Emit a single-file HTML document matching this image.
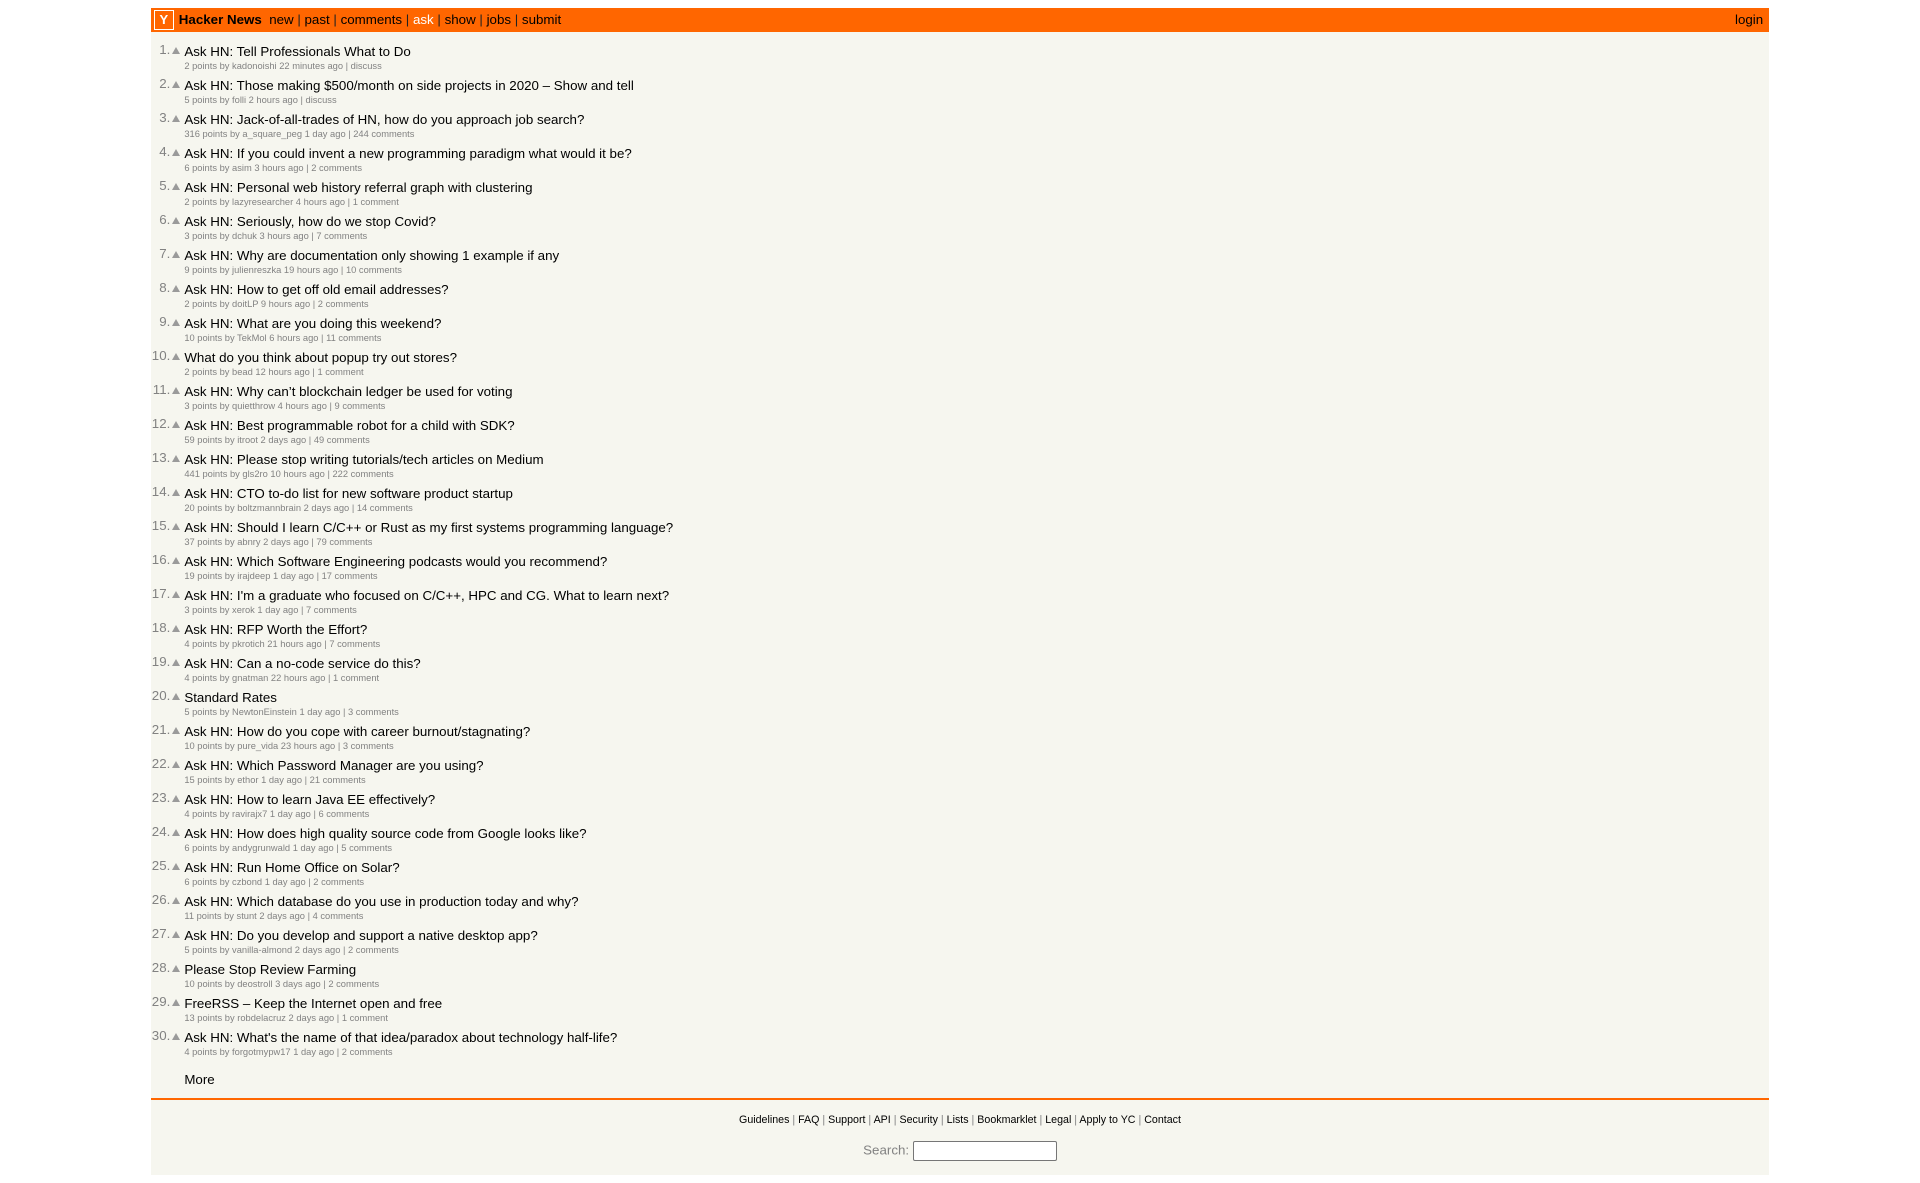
<!DOCTYPE html>
<html><head><meta charset="utf-8"><style>
body{margin:8px;background:#fff;font-family:"Liberation Sans",Arial,sans-serif;font-size:10pt;color:#828282}
td{font-family:"Liberation Sans",Arial,sans-serif;font-size:10pt;color:#828282}
table{border-collapse:collapse}
#hnmain{width:85%;margin:0 auto;background:#f6f6ef}
a{color:#000;text-decoration:none}
.hdr{background:#ff6600;padding:1px 2px}
.pagetop{font-size:10pt;color:#222;line-height:12px}
.pagetop a{color:#000}
.logo{display:inline-block;width:18px;height:18px;border:1px solid #fff;color:#fff;font-weight:bold;font-size:13px;line-height:18px;text-align:center;vertical-align:middle}
.title{font-size:10pt;color:#828282}
.title a{color:#000}
.rank{color:#828282;text-align:right;vertical-align:top;padding-top:1px}
.vote{vertical-align:top;padding:0}
.arrow{width:0;height:0;border-left:4px solid transparent;border-right:4px solid transparent;border-bottom:7px solid #9a9a9a;margin:5px 4px 6px 2px}
.items td.subtext{font-size:7pt;color:#828282;line-height:11px;padding-top:1px}
.subtext a{color:#828282}
.items td{padding:0}
.foot{border-top:2px solid #ff6600;text-align:center;padding:11px 0 14px}
.yc{font-size:8pt;color:#828282}
.yc a{color:#000}
input{width:142px;height:18px;border:1px solid #767676;border-radius:2px;padding:0;vertical-align:middle;background:#fff}
</style></head><body>
<table id="hnmain"><tr><td class="hdr">
<table style="width:100%"><tr>
<td style="width:18px;padding-right:4px"><span class="logo">Y</span></td>
<td class="pagetop"><b><a href="#">Hacker News</a></b>&nbsp;&nbsp;<a href="#">new</a> | <a href="#">past</a> | <a href="#">comments</a> | <a href="#" style="color:#fff">ask</a> | <a href="#">show</a> | <a href="#">jobs</a> | <a href="#">submit</a></td>
<td class="pagetop" style="text-align:right;padding-right:4px"><a href="#">login</a></td>
</tr></table></td></tr>
<tr style="height:9px"><td></td></tr>
<tr><td>
<table class="items">
<tbody id="it"></tbody>
</table>
</td></tr>
<tr><td class="foot">
<span class="yc"><a href="#">Guidelines</a> | <a href="#">FAQ</a> | <a href="#">Support</a> | <a href="#">API</a> | <a href="#">Security</a> | <a href="#">Lists</a> | <a href="#">Bookmarklet</a> | <a href="#">Legal</a> | <a href="#">Apply to YC</a> | <a href="#">Contact</a></span><br><br>
<form style="margin:0">Search: <input type="text"></form>
</td></tr>
</table>
<script>
var d=[
["Ask HN: Tell Professionals What to Do","2 points by kadonoishi 22 minutes ago | discuss"],
["Ask HN: Those making $500/month on side projects in 2020 – Show and tell","5 points by folli 2 hours ago | discuss"],
["Ask HN: Jack-of-all-trades of HN, how do you approach job search?","316 points by a_square_peg 1 day ago | 244 comments"],
["Ask HN: If you could invent a new programming paradigm what would it be?","6 points by asim 3 hours ago | 2 comments"],
["Ask HN: Personal web history referral graph with clustering","2 points by lazyresearcher 4 hours ago | 1 comment"],
["Ask HN: Seriously, how do we stop Covid?","3 points by dchuk 3 hours ago | 7 comments"],
["Ask HN: Why are documentation only showing 1 example if any","9 points by julienreszka 19 hours ago | 10 comments"],
["Ask HN: How to get off old email addresses?","2 points by doitLP 9 hours ago | 2 comments"],
["Ask HN: What are you doing this weekend?","10 points by TekMol 6 hours ago | 11 comments"],
["What do you think about popup try out stores?","2 points by bead 12 hours ago | 1 comment"],
["Ask HN: Why can’t blockchain ledger be used for voting","3 points by quietthrow 4 hours ago | 9 comments"],
["Ask HN: Best programmable robot for a child with SDK?","59 points by itroot 2 days ago | 49 comments"],
["Ask HN: Please stop writing tutorials/tech articles on Medium","441 points by gls2ro 10 hours ago | 222 comments"],
["Ask HN: CTO to-do list for new software product startup","20 points by boltzmannbrain 2 days ago | 14 comments"],
["Ask HN: Should I learn C/C++ or Rust as my first systems programming language?","37 points by abnry 2 days ago | 79 comments"],
["Ask HN: Which Software Engineering podcasts would you recommend?","19 points by irajdeep 1 day ago | 17 comments"],
["Ask HN: I'm a graduate who focused on C/C++, HPC and CG. What to learn next?","3 points by xerok 1 day ago | 7 comments"],
["Ask HN: RFP Worth the Effort?","4 points by pkrotich 21 hours ago | 7 comments"],
["Ask HN: Can a no-code service do this?","4 points by gnatman 22 hours ago | 1 comment"],
["Standard Rates","5 points by NewtonEinstein 1 day ago | 3 comments"],
["Ask HN: How do you cope with career burnout/stagnating?","10 points by pure_vida 23 hours ago | 3 comments"],
["Ask HN: Which Password Manager are you using?","15 points by ethor 1 day ago | 21 comments"],
["Ask HN: How to learn Java EE effectively?","4 points by ravirajx7 1 day ago | 6 comments"],
["Ask HN: How does high quality source code from Google looks like?","6 points by andygrunwald 1 day ago | 5 comments"],
["Ask HN: Run Home Office on Solar?","6 points by czbond 1 day ago | 2 comments"],
["Ask HN: Which database do you use in production today and why?","11 points by stunt 2 days ago | 4 comments"],
["Ask HN: Do you develop and support a native desktop app?","5 points by vanilla-almond 2 days ago | 2 comments"],
["Please Stop Review Farming","10 points by deostroll 3 days ago | 2 comments"],
["FreeRSS – Keep the Internet open and free","13 points by robdelacruz 2 days ago | 1 comment"],
["Ask HN: What's the name of that idea/paradox about technology half-life?","4 points by forgotmypw17 1 day ago | 2 comments"]];
var h="";
d.forEach(function(r,i){
h+='<tr><td class="rank" style="width:18px">'+(i+1)+'.</td><td class="vote"><div class="arrow"></div></td><td class="title"><a href="#">'+r[0]+'</a></td></tr>';
h+='<tr><td colspan="2"></td><td class="subtext">'+r[1].replace(/\| (.*)$/,'| <a href="#">$1</a>')+'</td></tr><tr><td colspan="3" style="height:4px"></td></tr>';
});
h+='<tr style="height:10px"><td colspan="3"></td></tr><tr><td colspan="2"></td><td class="title"><a href="#">More</a></td></tr><tr style="height:10px"><td colspan="3"></td></tr>';
document.getElementById("it").innerHTML=h;
</script>
</body></html>
